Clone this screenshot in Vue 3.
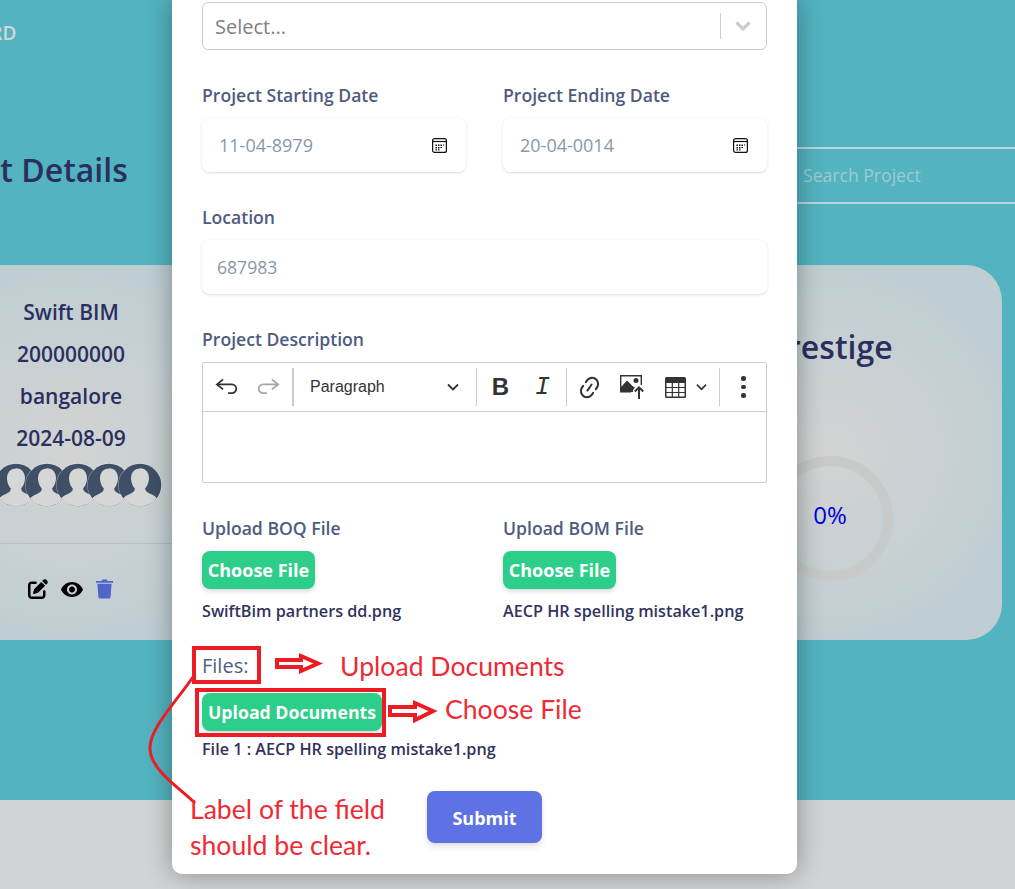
<script setup>
const infoLines = ['Swift BIM', '200000000', 'bangalore', '2024-08-09']
const avatars = [1, 2, 3, 4, 5]
const dateFields = [
  { label: 'Project Starting Date', value: '11-04-8979' },
  { label: 'Project Ending Date', value: '20-04-0014' }
]
const uploads = [
  { label: 'Upload BOQ File', file: 'SwiftBim partners dd.png' },
  { label: 'Upload BOM File', file: 'AECP HR spelling mistake1.png' }
]
</script>

<template>
  <div class="page">
    <div class="backdrop">
      <div class="brand">DASHBOARD</div>
      <div class="title-row">
        <h1 class="page-title">Project Details</h1>
        <div class="search">Search Project</div>
      </div>
      <div class="cards">
        <section class="card">
          <div class="card-info">
            <p v-for="line in infoLines" :key="line" class="info-line">{{ line }}</p>
            <div class="avatars">
              <svg v-for="a in avatars" :key="a" class="avatar" viewBox="0 0 44 44">
                <circle cx="22" cy="22" r="22" fill="#fff" opacity=".35" />
                <circle cx="22" cy="22" r="21.300" fill="#3f4f66" />
                <path d="M22 5.500c-5.500 0-9 4.200-9 9.800 0 4.200 1.500 7.700 3.800 10.200 0 3-2.300 4.200-5.500 5.700-3.200 1.400-5 2.500-6 4.300A21.300 21.300 0 0 0 22 43.300a21.300 21.300 0 0 0 16.700-8.100c-1-1.800-2.800-2.900-6-4.300-3.200-1.500-5.500-2.700-5.500-5.700 2.300-2.500 3.800-6 3.800-10.200 0-5.600-3.500-9.800-9-9.800z" fill="#d5d7d7" />
              </svg>
            </div>
          </div>
          <div class="card-actions">
            <svg class="act-edit" viewBox="0 0 512 512"><path d="M471.600 21.700c-21.900-21.900-57.300-21.900-79.200 0L362.300 51.700l97.900 97.900 30.100-30.100c21.900-21.900 21.900-57.300 0-79.200L471.600 21.700zm-299.200 220c-6.100 6.100-10.800 13.600-13.500 21.900l-29.600 88.800c-2.900 8.600-.6 18.100 5.800 24.600s15.900 8.700 24.600 5.800l88.800-29.600c8.200-2.700 15.700-7.400 21.900-13.500L437.700 172.300 339.700 74.300 172.400 241.700zM96 64C43 64 0 107 0 160V416c0 53 43 96 96 96H352c53 0 96-43 96-96V320c0-17.700-14.300-32-32-32s-32 14.300-32 32v96c0 17.700-14.300 32-32 32H96c-17.700 0-32-14.300-32-32V160c0-17.700 14.300-32 32-32h96c17.700 0 32-14.300 32-32s-14.300-32-32-32H96z" /></svg>
            <svg class="act-eye" viewBox="1 4.500 22 15"><path d="M12 4.500C7 4.500 2.730 7.610 1 12c1.730 4.390 6 7.500 11 7.500s9.270-3.110 11-7.500c-1.730-4.390-6-7.500-11-7.500zM12 17c-2.760 0-5-2.240-5-5s2.240-5 5-5 5 2.240 5 5-2.240 5-5 5zm0-8c-1.660 0-3 1.340-3 3s1.340 3 3 3 3-1.340 3-3-1.340-3-3-3z" /></svg>
            <svg class="act-trash" viewBox="0 0 18 20"><path d="M6.500 0h5l.7 1.400H18v2H0v-2h5.800zM1.500 4.500h15l-1 14a1.600 1.600 0 0 1-1.600 1.500H4.100a1.600 1.600 0 0 1-1.600-1.500z" /></svg>
          </div>
        </section>
        <section class="card card-right">
          <h2 class="card-name">Prestige</h2>
          <div class="progress"><span>0%</span></div>
        </section>
      </div>
      <div class="footer-strip"></div>
    </div>

    <div class="modal">
      <div class="select-box">
        <span class="select-placeholder">Select...</span>
        <span class="select-sep"></span>
        <svg class="select-chevron" viewBox="0 0 20 20"><path d="M3.500 6.500 10 13l6.500-6.500" fill="none" stroke="#ccc" stroke-width="3.200" /></svg>
      </div>

      <div class="two-col date-row">
        <div v-for="d in dateFields" :key="d.label">
          <label class="field-label">{{ d.label }}</label>
          <div class="text-input date-input">
            <span class="date-value">{{ d.value }}</span>
            <svg class="cal-icon" viewBox="0 0 15 15">
              <rect x=".6" y=".6" width="13.800" height="13.800" rx="2" fill="none" stroke="#111" stroke-width="1.200" />
              <path d="M1 3.500h13" stroke="#111" stroke-width="1.200" />
              <path d="M3.500 6.500h1.500v1.500H3.500zM6 6.500h1.500v1.500H6zM8.500 6.500H10v1.500H8.500zM11 6.500h1.200v1H11zM3.500 9h1.500v1.500H3.500zM6 9h1.500v1.500H6zM8.500 9H10v1H8.500zM3.500 11.200h1.500v1.200H3.500zM6 11.200h1.500v1.200H6z" fill="#111" />
            </svg>
          </div>
        </div>
      </div>

      <label class="field-label location-label">Location</label>
      <div class="text-input location-input">687983</div>

      <label class="field-label desc-label">Project Description</label>
      <div class="editor">
        <div class="toolbar">
          <button class="tool">
            <svg viewBox="0 0 20 20" width="25" height="25"><path d="M6.500 3.500 1.500 7.500l5 4M1.500 7.500h12a3.500 3.500 0 0 1 0 7h-3" fill="none" stroke="#333" stroke-width="1.400" /></svg>
          </button>
          <button class="tool">
            <svg viewBox="0 0 20 20" width="25" height="25"><path d="m13.500 3.500 5 4-5 4M18.500 7.500h-12a3.500 3.500 0 0 0 0 7h3" fill="none" stroke="#a5a5a5" stroke-width="1.400" /></svg>
          </button>
          <span class="tool-sep tool-sep-strong"></span>
          <div class="para-drop">
            <span>Paragraph</span>
            <svg viewBox="0 0 12 8" width="12" height="8"><path d="m1 1.500 5 5 5-5" fill="none" stroke="#333" stroke-width="1.800" /></svg>
          </div>
          <span class="tool-sep"></span>
          <button class="tool tool-bold">B</button>
          <button class="tool tool-italic">I</button>
          <span class="tool-sep"></span>
          <button class="tool tool-link">
            <svg viewBox="0 0 20 20" width="27" height="27"><path fill="#333" d="m11.077 15 .991-1.416a.75.75 0 1 1 1.229.86l-1.148 1.640a.748.748 0 0 1-.217.206 5.251 5.251 0 0 1-8.503-5.955.741.741 0 0 1 .12-.274l1.147-1.639a.75.75 0 1 1 1.228.86L4.933 10.700l.006.003a3.750 3.750 0 0 0 6.132 4.294l.006.004zm5.494-5.335a.748.748 0 0 1-.12.274l-1.147 1.639a.75.75 0 1 1-1.228-.86l.86-1.230a3.750 3.750 0 0 0-6.144-4.301l-.86 1.229a.75.75 0 0 1-1.229-.86l1.148-1.640a.748.748 0 0 1 .217-.206 5.250 5.250 0 0 1 8.503 5.955zm-4.563-2.532a.75.75 0 0 1 .184 1.045l-3.155 4.510a.75.75 0 1 1-1.229-.86l3.155-4.510a.75.75 0 0 1 1.045-.185z" /></svg>
          </button>
          <button class="tool tool-image">
            <svg viewBox="0 0 26 24" width="26" height="24"><path d="M0 0h22v10h-1.400V1.400H1.400V16H11v1.500H0z" fill="#333" /><circle cx="16" cy="5.500" r="2.500" fill="#333" /><path d="M1 17v-5l6-6.500 5.500 5.500L15 12.500l-2 2.500v2z" fill="#333" /><path d="M19 24V12.500M14.800 16.500l4.200-4.200 4.200 4.200" fill="none" stroke="#333" stroke-width="2" /></svg>
          </button>
          <button class="tool tool-table">
            <svg viewBox="0 0 21 21" width="21" height="21"><rect width="21" height="21" rx="1.500" fill="#333" /><path d="M1.500 6h5.200v4H1.500zM7.900 6h5.200v4H7.900zM14.300 6h5.200v4h-5.200zM1.500 11h5.200v4H1.500zM7.900 11h5.200v4H7.900zM14.300 11h5.200v4h-5.200zM1.500 16h5.200v3.500H1.500zM7.900 16h5.200v3.500H7.900zM14.300 16h5.200v3.500h-5.200z" fill="#fff" /></svg>
            <svg viewBox="0 0 12 8" width="11" height="8"><path d="m1 1.500 5 5 5-5" fill="none" stroke="#333" stroke-width="1.800" /></svg>
          </button>
          <span class="tool-sep"></span>
          <button class="tool tool-dots"><i></i><i></i><i></i></button>
        </div>
        <div class="editor-body"></div>
      </div>

      <div class="two-col upload-row">
        <div v-for="u in uploads" :key="u.label">
          <label class="field-label">{{ u.label }}</label>
          <button class="green-btn choose-btn">Choose File</button>
          <p class="file-name">{{ u.file }}</p>
        </div>
      </div>

      <div class="files-label">Files:</div>
      <button class="green-btn docs-btn">Upload Documents</button>
      <p class="file-name file-one">File 1 : AECP HR spelling mistake1.png</p>
      <div class="submit-row"><button class="submit-btn">Submit</button></div>
    </div>

    <svg class="markup" viewBox="0 0 1015 889">
      <g fill="none" stroke="#ed1c24">
        <rect x="194" y="648" width="65" height="34" stroke-width="4" />
        <rect x="197" y="690" width="187" height="45" stroke-width="4" />
        <path d="M193 677C176 702 150 728 150 748 150 770 180 788 195 803" stroke-width="3" />
        <path d="M277 660h24v-4l17 7.500-17 7.500v-4h-24z" fill="#fff" stroke-width="4" />
        <path d="M390 707h25v-4l18 8-18 9v-5h-25z" fill="#fff" stroke-width="4" />
      </g>
    </svg>
    <span class="note note-upload">Upload Documents</span>
    <span class="note note-choose">Choose File</span>
    <span class="note note-label">Label of the field<br />should be clear.</span>
  </div>
</template>

<style scoped>
.page {
  position: relative;
  width: 1015px;
  height: 889px;
  overflow: hidden;
  font-family: "Open Sans", sans-serif;
  color: #2b2f5f;
}

.backdrop {
  height: 100%;
  display: flex;
  flex-direction: column;
  background: #53b3c0;
}

.brand {
  margin: 21px 0 0 -101px;
  font-size: 19px;
  line-height: 24px;
  font-weight: 600;
  color: #d5d7d8;
}

.title-row {
  height: 220px;
  display: flex;
  justify-content: space-between;
}

.page-title {
  margin: 101px 0 0 -96px;
  font-size: 32px;
  line-height: 48px;
  font-weight: 600;
  color: #2b2f5f;
}

.search {
  width: 312px;
  height: 57px;
  margin-top: 102px;
  padding-left: 100px;
  box-sizing: border-box;
  border-top: 2px solid #bdd5da;
  border-bottom: 2px solid #bdd5da;
  font-size: 17.600px;
  line-height: 52px;
  color: #9fcbd2;
}

.cards {
  height: 375px;
  margin-left: -102px;
  margin-right: 13px;
  display: flex;
  justify-content: space-between;
}

.card {
  width: 344px;
  border-radius: 36px;
  background: radial-gradient(circle at center, #d3d3d3 0, #bfced3 75%);
  box-sizing: border-box;
}

.card-info {
  height: 279px;
  padding: 26px 0 0 2px;
  box-sizing: border-box;
  border-bottom: 1px solid #b3c0c4;
  text-align: center;
}

.info-line {
  margin: 0;
  height: 42px;
  font-size: 21px;
  line-height: 42px;
  font-weight: 600;
}

.avatars {
  display: flex;
  justify-content: center;
  margin-top: 4px;
  padding-left: 26px;
}

.avatar {
  width: 44px;
  height: 44px;
  flex: none;
  margin-left: -13px;
}

.card-actions {
  display: flex;
  align-items: center;
  height: 90px;
  padding-left: 130px;
}

.act-edit {
  width: 20px;
  height: 20px;
}

.act-eye {
  width: 22px;
  height: 15px;
  margin-left: 13px;
}

.act-trash {
  width: 17px;
  height: 20px;
  margin-left: 13px;
  fill: #5065c8;
}

.card-right {
  display: flex;
  flex-direction: column;
  align-items: center;
  padding-top: 58px;
}

.card-name {
  margin: 0;
  font-size: 32px;
  line-height: 48px;
  font-weight: 600;
  color: #2b2f5f;
}

.progress {
  width: 125px;
  height: 125px;
  margin-top: 85px;
  padding-bottom: 8px;
  box-sizing: border-box;
  border: 10px solid #c8caca;
  border-radius: 50%;
  display: flex;
  align-items: center;
  justify-content: center;
  font-size: 24px;
  color: #0000e0;
}

.footer-strip {
  flex: 1;
  margin-top: 160px;
  background: #d1d3d5;
}

.modal {
  position: absolute;
  left: 172px;
  top: 0;
  width: 625px;
  height: 874px;
  padding: 2px 30px 0;
  box-sizing: border-box;
  background: #fff;
  border-radius: 0 0 10px 10px;
  box-shadow: 0 0 26px rgba(0, 0, 0, .35);
}

.select-box {
  height: 48px;
  box-sizing: border-box;
  border: 1px solid #ccc;
  border-radius: 6px;
  display: flex;
  align-items: center;
  padding-left: 12px;
}

.select-placeholder {
  flex: 1;
  font-size: 20px;
  color: #808080;
}

.select-sep {
  width: 1px;
  height: 26px;
  background: #ccc;
}

.select-chevron {
  width: 20px;
  height: 20px;
  margin: 0 13px 0 12px;
}

.two-col {
  display: grid;
  grid-template-columns: 264px 264px;
  column-gap: 37px;
}

.date-row {
  margin-top: 33px;
}

.field-label {
  display: block;
  font-size: 17.600px;
  line-height: 24px;
  font-weight: 600;
  color: #4f5b80;
}

.text-input {
  background: #fff;
  border-radius: 8px;
  height: 54px;
  box-shadow: 0 1px 3px rgba(50, 50, 93, .15), 0 1px 0 rgba(0, 0, 0, .02);
}

.date-input {
  margin-top: 11px;
  display: flex;
  align-items: center;
  justify-content: space-between;
  padding: 0 19px 0 17px;
  box-sizing: border-box;
}

.date-value {
  font-size: 18px;
  color: #8898aa;
}

.cal-icon {
  width: 15px;
  height: 15px;
}

.location-label {
  margin-top: 33px;
}

.location-input {
  margin-top: 11px;
  padding-left: 15px;
  font-size: 17.600px;
  line-height: 54px;
  color: #8898aa;
}

.desc-label {
  margin-top: 33px;
}

.editor {
  margin-top: 11px;
  height: 121px;
  box-sizing: border-box;
  border: 1px solid #ccc;
  border-radius: 2px;
}

.toolbar {
  height: 49px;
  box-sizing: border-box;
  border-bottom: 1px solid #ccc;
  display: flex;
  align-items: center;
  padding-left: 4px;
}

.tool {
  width: 40px;
  height: 38px;
  flex: none;
  padding: 0;
  border: 0;
  background: none;
  display: flex;
  align-items: center;
  justify-content: center;
  color: #333;
}

.tool-sep {
  width: 1px;
  height: 38px;
  flex: none;
  background: #ccc;
}

.tool-sep-strong {
  width: 2px;
  margin-left: 5px;
}

.para-drop {
  width: 182px;
  flex: none;
  box-sizing: border-box;
  padding: 0 17px 0 16px;
  display: flex;
  align-items: center;
  justify-content: space-between;
  font-family: "Liberation Sans", sans-serif;
  font-size: 16px;
  color: #333;
}

.tool-bold,
.tool-italic {
  width: 41px;
}

.tool-bold {
  margin-left: 3px;
  font-family: "Liberation Sans", sans-serif;
  font-size: 24px;
  font-weight: 700;
}

.tool-italic {
  margin-left: 1px;
  font-family: "Liberation Mono", monospace;
  font-size: 25px;
  font-style: italic;
}

.tool-italic + .tool-sep {
  margin-left: 3px;
}

.tool-link {
  width: 41px;
  margin-left: 2px;
}

.tool-image {
  width: 41px;
  margin-left: 2px;
}

.tool-table {
  width: 48px;
  margin-left: 9px;
  gap: 10px;
}

.tool-table + .tool-sep {
  margin-left: 9px;
}

.tool-dots {
  width: 47px;
  flex-direction: column;
  gap: 4px;
}

.tool-dots i {
  width: 4.500px;
  height: 4.500px;
  border-radius: 50%;
  background: #333;
}

.upload-row {
  margin-top: 33px;
}

.green-btn {
  display: block;
  border: 0;
  padding: 0;
  background: #2dce89;
  color: #fff;
  font-family: inherit;
  font-size: 18px;
  font-weight: 700;
  border-radius: 8px;
  box-shadow: 0 2px 4px rgba(50, 50, 93, .2);
}

.choose-btn {
  width: 113px;
  height: 38px;
  margin-top: 11px;
}

.file-name {
  margin: 12px 0 0;
  font-size: 16.200px;
  line-height: 20px;
  font-weight: 600;
  color: #32325d;
}

.files-label {
  margin-top: 33px;
  font-size: 20px;
  line-height: 24px;
  color: #525f7f;
}

.docs-btn {
  width: 180px;
  height: 38px;
  margin-top: 15px;
  font-size: 17.700px;
}

.file-one {
  margin-top: 8px;
}

.submit-row {
  display: flex;
  justify-content: center;
  margin-top: 32px;
}

.submit-btn {
  width: 115px;
  height: 52px;
  padding: 2px 0 0;
  border: 0;
  border-radius: 8px;
  background: #5e72e4;
  color: #fff;
  font-family: inherit;
  font-size: 18px;
  font-weight: 700;
  box-shadow: 0 4px 6px rgba(50, 50, 93, .11), 0 1px 3px rgba(0, 0, 0, .08);
}

.markup {
  position: absolute;
  left: 0;
  top: 0;
  width: 1015px;
  height: 889px;
  pointer-events: none;
}

.note {
  position: absolute;
  font-family: Lato, sans-serif;
  font-size: 26.600px;
  line-height: 36px;
  color: #ee2a35;
  white-space: nowrap;
}

.note-upload {
  left: 340px;
  top: 648px;
}

.note-choose {
  left: 445px;
  top: 691px;
}

.note-label {
  left: 190px;
  top: 791px;
}
</style>
